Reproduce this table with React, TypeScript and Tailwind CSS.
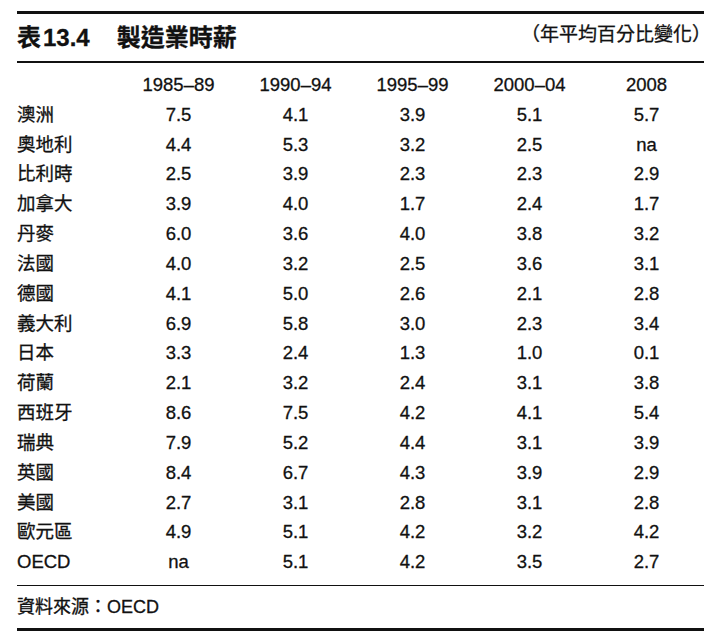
const FONT = "font-['Liberation_Sans','Noto_Sans_CJK_TC',sans-serif]"

const YEARS = ["1985–89", "1990–94", "1995–99", "2000–04", "2008"]

type Row = { name: string; values: string[] }

const ROWS: Row[] = [
  { name: "澳洲", values: ["7.5", "4.1", "3.9", "5.1", "5.7"] },
  { name: "奧地利", values: ["4.4", "5.3", "3.2", "2.5", "na"] },
  { name: "比利時", values: ["2.5", "3.9", "2.3", "2.3", "2.9"] },
  { name: "加拿大", values: ["3.9", "4.0", "1.7", "2.4", "1.7"] },
  { name: "丹麥", values: ["6.0", "3.6", "4.0", "3.8", "3.2"] },
  { name: "法國", values: ["4.0", "3.2", "2.5", "3.6", "3.1"] },
  { name: "德國", values: ["4.1", "5.0", "2.6", "2.1", "2.8"] },
  { name: "義大利", values: ["6.9", "5.8", "3.0", "2.3", "3.4"] },
  { name: "日本", values: ["3.3", "2.4", "1.3", "1.0", "0.1"] },
  { name: "荷蘭", values: ["2.1", "3.2", "2.4", "3.1", "3.8"] },
  { name: "西班牙", values: ["8.6", "7.5", "4.2", "4.1", "5.4"] },
  { name: "瑞典", values: ["7.9", "5.2", "4.4", "3.1", "3.9"] },
  { name: "英國", values: ["8.4", "6.7", "4.3", "3.9", "2.9"] },
  { name: "美國", values: ["2.7", "3.1", "2.8", "3.1", "2.8"] },
  { name: "歐元區", values: ["4.9", "5.1", "4.2", "3.2", "4.2"] },
  { name: "OECD", values: ["na", "5.1", "4.2", "3.5", "2.7"] },
]

export default function App() {
  return (
    <div className={`${FONT} h-[642px] w-[713px] bg-white text-[#111] [-webkit-text-stroke:0.3px_#111]`}>
      <div className="ml-[17px] w-[687px] pt-[11px]">
        <div className="h-[3px] bg-[#111]" />

        {/* title */}
        <div className="flex h-[47px] items-center justify-between">
          <div className="flex items-center text-[24px] font-bold leading-none">
            <span>表</span>
            <span className="ml-[2px]">13.4</span>
            <span className="ml-[27px]">製造業時薪</span>
          </div>
          <div className="-mr-[7px] -mt-[6px] text-[19px] leading-none">（年平均百分比變化）</div>
        </div>

        <div className="h-[2px] bg-[#111]" />

        {/* table */}
        <div className="mt-[7px] text-[18.5px] leading-none">
          <div className="grid h-[30px] grid-cols-[103px_repeat(5,117px)] items-center">
            <div />
            {YEARS.map((year) => (
              <div key={year} className="text-center">
                {year}
              </div>
            ))}
          </div>
          {ROWS.map((row) => (
            <div
              key={row.name}
              className="grid h-[29.85px] grid-cols-[103px_repeat(5,117px)] items-center"
            >
              <div>{row.name}</div>
              {row.values.map((value, index) => (
                <div key={index} className="text-center">
                  {value}
                </div>
              ))}
            </div>
          ))}
        </div>

        <div className="mt-[7px] h-[1.5px] bg-[#111]" />

        {/* source */}
        <div className="flex h-[41.5px] items-center text-[18px] leading-none">資料來源：OECD</div>

        <div className="h-[3px] bg-[#111]" />
      </div>
    </div>
  )
}
